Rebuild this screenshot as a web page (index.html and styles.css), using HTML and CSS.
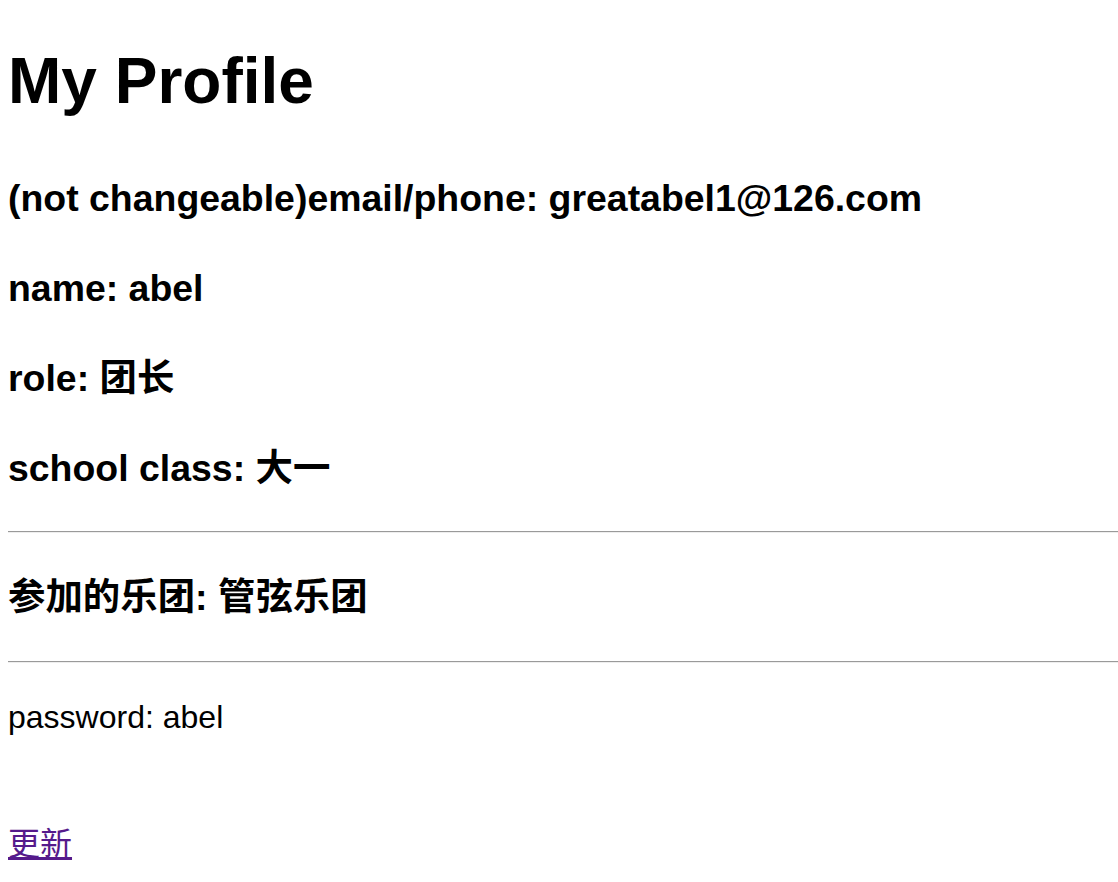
FILE: index.html
```html
<!DOCTYPE html>
<html lang="zh-CN">
<head>
<meta charset="utf-8">
<title>My Profile</title>
<link rel="stylesheet" href="styles.css">
</head>
<body>
<h1 class="title">My Profile</h1>
<h3 class="field">(not changeable)email/phone: greatabel1@126.com</h3>
<h3 class="field">name: abel</h3>
<h3 class="field">role: 团长</h3>
<h3 class="field">school class: 大一</h3>
<hr class="rule">
<h3 class="field">参加的乐团: 管弦乐团</h3>
<hr class="rule">
<p class="plain">password: abel</p>
<br>
<a class="update" href="#">更新</a>
</body>
</html>
```
FILE: styles.css
```css
html {
  font-size: 32px;
}
body {
  margin: 8px 0 8px 8px;
  font-family: "Liberation Sans", "Noto Sans CJK SC", sans-serif;
  font-size: 32px;
  line-height: 1.4;
  color: #000;
  background: #fff;
}
.title {
  font-size: 64px;
  font-weight: bold;
  margin: 25px 0 43px;
  line-height: 96px;
}
.field {
  font-size: 1.17em;
  font-weight: bold;
  margin: 1em 0;
  line-height: 1.4;
}
.rule {
  margin: 16px 0;
  border: 0;
  border-top: 1px solid #9a9a9a;
  border-bottom: 1px solid #eeeeee;
  height: 0;
}
.plain {
  margin: 1em 0 38px;
}
.update {
  color: #551a8b;
  text-decoration: underline;
}
```
